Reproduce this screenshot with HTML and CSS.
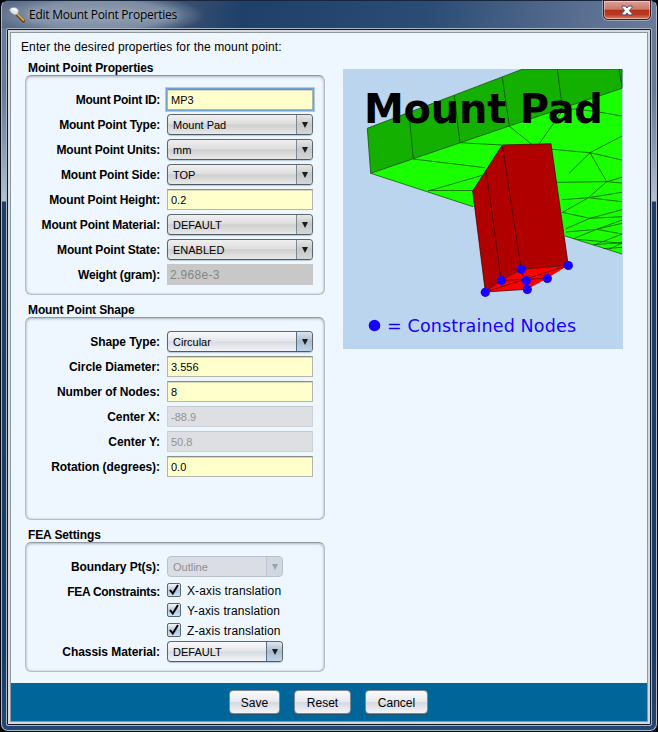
FILE: index.html
```html
<!DOCTYPE html>
<html lang="en">
<head>
<meta charset="utf-8">
<title>Edit Mount Point Properties</title>
<link rel="stylesheet" href="styles.css">
</head>
<body>
<div class="window">
  <header class="titlebar">
    <svg class="app-icon" width="18" height="18" viewBox="0 0 18 18">
      <path d="M9 8.500 15.500 15" stroke="#6d4317" stroke-width="3.200" stroke-linecap="round"/>
      <path d="M9.500 8.200 15.500 14.200" stroke="#dda650" stroke-width="1.700" stroke-linecap="round"/>
      <path d="M1.500 3.500Q3 1 7 1.500Q11 2.500 10.500 6Q9.500 9.500 6 8.500Q2 7 1.500 3.500Z" fill="#dfe5e8" stroke="#929da6" stroke-width=".8"/>
      <path d="M2.500 3.200Q5 1.300 9 3.500L8 5.500Q5 3.800 2.500 3.200Z" fill="#fff"/>
    </svg>
    <span class="title">Edit Mount Point Properties</span>
    <div class="close">
      <svg width="12" height="11" viewBox="0 0 12 11"><path d="M1 1H4.500L6 3 7.500 1H11V2.500L8.500 5.500 11 8.500V10H7.500L6 8 4.500 10H1V8.500L3.500 5.500 1 2.500Z" fill="#f8f8f8" stroke="#4b5068"/></svg>
    </div>
  </header>
  <div class="client">
    <div class="content">
      <p class="intro">Enter the desired properties for the mount point:</p>
      <div class="columns">
        <div class="forms">
          <h2>Moint Point Properties</h2>
          <section class="group props">
            <label class="tight">Mount Point ID:</label><div class="input focus">MP3</div>
            <label>Mount Point Type:</label><div class="select">Mount Pad<i></i></div>
            <label>Mount Point Units:</label><div class="select">mm<i></i></div>
            <label>Mount Point Side:</label><div class="select">TOP<i></i></div>
            <label>Mount Point Height:</label><div class="input">0.2</div>
            <label>Mount Point Material:</label><div class="select">DEFAULT<i></i></div>
            <label>Mount Point State:</label><div class="select">ENABLED<i></i></div>
            <label>Weight (gram):</label><div class="readonly">2.968e-3</div>
          </section>
          <h2 class="lower">Mount Point Shape</h2>
          <section class="group shape">
            <label>Shape Type:</label><div class="select bright">Circular<i></i></div>
            <label>Circle Diameter:</label><div class="input">3.556</div>
            <label>Number of Nodes:</label><div class="input">8</div>
            <label>Center X:</label><div class="input off">-88.9</div>
            <label>Center Y:</label><div class="input off">50.8</div>
            <label>Rotation (degrees):</label><div class="input">0.0</div>
          </section>
          <h2 class="lower">FEA Settings</h2>
          <section class="group fea">
            <label>Boundary Pt(s):</label><div class="select short disabled">Outline<i></i></div>
            <label class="tight">FEA Constraints:</label>
            <div class="checks">
              <div class="check"><span class="box"><svg width="14" height="14" viewBox="0 0 14 14"><path d="M3 7 5.800 10.500 11 2" /></svg></span><span class="check-text">X-axis translation</span></div>
              <div class="check"><span class="box"><svg width="14" height="14" viewBox="0 0 14 14"><path d="M3 7 5.800 10.500 11 2" /></svg></span><span class="check-text">Y-axis translation</span></div>
              <div class="check"><span class="box"><svg width="14" height="14" viewBox="0 0 14 14"><path d="M3 7 5.800 10.500 11 2" /></svg></span><span class="check-text">Z-axis translation</span></div>
            </div>
            <label>Chassis Material:</label><div class="select short bright">DEFAULT<i></i></div>
          </section>
        </div>
        <svg class="preview" width="280" height="280" viewBox="0 0 280 280">
          <rect width="280" height="280" fill="#bbd5ee"/>
          <path d="M27.700 104.300 70.300 90 117 73.700 166.300 57 279 19.300V185L222 167 130 137.700Z" fill="#1aff00"/>
          <path d="M24.300 59.300 180 0H279V19.300L166.300 57 27.700 104.300Z" fill="#13b000" stroke="#174d10" stroke-width=".8"/>
          <g class="mesh">
            <path d="M66 43.600 70.300 90M111.300 26.700 117 73.700M159.300 8.300 166.300 57M214.300 0 219 37M276 0 278.700 17"/>
            <path d="M27.700 104.300 130 137.700M222 167 279 185"/>
            <path d="M70.300 90 142 98.700M85.300 122 142 105.500M85 121.500H130M117 73.700 159 76M166 57 189 75.500M220 41 196 75"/>
            <path d="M209 80.300 247 83.700 279 67M247 83.700 279 91M247 83.700 226 104.300M247 83.700 263.700 112.700 279 108.300M214.300 113.300 263.700 112.700 279 114M263.700 112.700 245.300 128.700 219 143.700M219 130.700 245.300 128.700 279 123.300M245.300 128.700 279 132.700M220 41 232 40 253.700 42.700 279 47"/>
            <path d="M220 143.500 247 149.300 279 147.700M223 159.700 247 149.300 279 140.700M223 163 253.700 160.300 279 154.300M253.700 160.300 279 165M230.300 169.700 253.700 160.300 279 151M252 175.700 279 165M250 175.700 279 173.700M233.700 170.300 279 174.300M260.300 179.700 279 178.300M266 180.300 279 174"/>
          </g>
          <path d="M142.300 223 158.300 211.300 178.300 200.300 225.300 196.300 204.300 209.300 184.300 220.300Z" fill="#f00"/>
          <path d="M129.700 122 159.300 76 208 74.700 225.300 196.300 178.300 200.300 158.300 211.300 142.300 223Z" fill="#b00000"/>
          <path class="edges" d="M142.300 223 129.700 122 159.300 76 208 74.700 225.300 196.300 178.300 200.300 158.300 211.300 142.300 223 225.300 196.300M143 101 158.300 211.300M159.300 76 178.300 200.300 184.300 220.300M158.300 211.300 204.300 209.300M142.300 223 184.300 220.300"/>
          <g fill="#1800ff">
            <circle cx="142.300" cy="223.300" r="4.600"/><circle cx="158.300" cy="211.500" r="4.600"/><circle cx="178.300" cy="200.300" r="4.600"/><circle cx="225.300" cy="196.500" r="4.600"/><circle cx="204.300" cy="209.500" r="4.600"/><circle cx="183.300" cy="211.500" r="4.600"/><circle cx="184.300" cy="220.500" r="4.600"/><circle cx="31.500" cy="256.500" r="5.800"/>
          </g>
          <text class="pad-title" x="21" y="54" textLength="239">Mount Pad</text>
          <text class="pad-note" x="44" y="263" textLength="189">= Constrained Nodes</text>
        </svg>
      </div>
    </div>
    <footer>
      <div class="button save">Save</div>
      <div class="button reset">Reset</div>
      <div class="button cancel">Cancel</div>
    </footer>
  </div>
</div>
</body>
</html>
```
FILE: styles.css
```css
* { box-sizing: border-box; }
body { margin: 0; width: 658px; height: 732px; padding: 0 1px 1px; background: #02050d; overflow: hidden; font: 12px/15px "Liberation Sans", Arial, sans-serif; color: #000; }
h2, p { margin: 0; }
.window { width: 656px; height: 731px; border: 1px solid #a9bac9; border-top-color: #17263d; border-radius: 7px; padding: 0 4px 4px; background: linear-gradient(#6a7a99 0, #657a9a 90px, #8296b2 140px, #b4c1d0 200px, #1d3e68 201px, #173a66 650px, #254671 100%); }
.titlebar { display: flex; height: 27px; margin: 0 -4px; padding-left: 6px; border-radius: 6px 6px 0 0; background: radial-gradient(ellipse 105px 22px at 98px 14px, #919eaf 0, #8c9aadcc 65%, transparent 100%), linear-gradient(100deg, #5e6e88 0, #324b6e 30%, #1e4069 37%, #2b4c74 65%, #596e90 88%, #6a7a99 100%); }
.app-icon { margin-top: 5px; fill: none; }
.title { margin: 6px 0 0 3px; font: 12px/16px "Open Sans", sans-serif; letter-spacing: -.26px; white-space: nowrap; text-shadow: 0 0 5px #b9c4d2; }
.close { display: flex; align-items: center; justify-content: center; width: 48px; height: 20px; margin: -1px 5px 0 auto; padding-top: 1px; border: 1px solid #401e29; border-radius: 0 0 5px 5px; background: linear-gradient(#dfa095 0, #cb7867 47%, #af2f19 48%, #b93a21 75%, #dc8068); box-shadow: inset 0 0 0 1px #ffffff66, 0 0 0 1px #ffffff55; }
.client { width: 646px; height: 698px; border: 1px solid #a9b6c5; border-radius: 2px; background: #d3d9df; box-shadow: inset 0 0 0 1px #101928, inset 0 0 0 3px #d3d9df, inset 0 0 0 4px #8e969d; padding: 4px; }
.content { height: 650px; padding: 7px 0 0 10px; background: #eef7ff; }
.intro { height: 15px; letter-spacing: .12px; }
.columns { display: flex; align-items: flex-start; gap: 18px; padding-left: 4px; }
.forms { width: 300px; }
h2 { height: 20px; padding: 6px 0 0 3px; font: bold 12px/14px "Liberation Sans", Arial, sans-serif; letter-spacing: -.12px; }
h2.lower { padding-top: 8px; height: 22px; }
.group { display: grid; grid-template-columns: 135px 146px; column-gap: 6px; row-gap: 4px; align-content: start; border: 1px solid #b5bdc7; border-top-color: #92979f; border-radius: 6px; box-shadow: inset 0 1px 3px #9aa5b1aa, inset 0 0 2px #b9c2cc; padding: 13px 0 0; }
.group label { width: 134px; text-align: right; font-weight: bold; line-height: 21px; white-space: nowrap; padding-top: 1px; height: 21px; letter-spacing: -.06px; }
.props { height: 220px; }
.props label { letter-spacing: -.17px; }
.group label.tight { letter-spacing: -.3px; }
.shape { height: 203px; }
.fea { height: 130px; }
.input, .select, .readonly { height: 21px; width: 146px; font-size: 11px; line-height: 19px; }
.input { margin: 0; padding: 1px 3px 0; background: #ffc; border: 1px solid #b4b5b0; border-top-color: #8c8d8a; box-shadow: inset 0 1px #d8d8b8; }
.focus { outline: 1px solid #6da1d4; box-shadow: 0 0 0 2px #a8ccee, inset 0 1px #d8d8b8; }
.input.off { background: #dddfe3; color: #919396; border-color: #cdd2d8; border-top-color: #c2c8ce; box-shadow: none; }
.readonly { background: #c8c8c8; color: #858585; font-size: 12px; line-height: 22px; padding-left: 3px; letter-spacing: .3px; }
.select { display: flex; justify-content: space-between; padding: 0 0 0 5px; border: 1px solid #60666c; border-bottom-color: #505a65; border-radius: 4px; line-height: 20px; background: linear-gradient(#f0f0f0, #dedede 45%, #cfcfcf 52%, #e9e9e9); box-shadow: 0 1px 1px #b7c8d8; overflow: hidden; }
.select i { display: flex; align-items: center; justify-content: center; width: 16px; height: 19px; border-left: 1px solid #7b8995; background: linear-gradient(#e7e7e7, #c6c7c8 50%, #d5d6d8); }
.select i::before { content: ""; border: 3.500px solid transparent; border-top: 6px solid #1c1c1c; border-bottom: 0; }
.bright { background: linear-gradient(#fafafb, #e4e6ea 47%, #d7dae0 52%, #f2f4f8); }
.bright i { background: linear-gradient(#dce5ed, #a9bdcf 50%, #bfd5e8); border-color: #566f85; }
.short { width: 116px; }
.disabled { color: #8c8f94; background: #dadde3; border-color: #bbc1ca; box-shadow: none; }
.disabled i { background: #cfd7e1; border-color: #bdc6d0; }
.disabled i::before { border-top-color: #9ca2aa; }
.checks { height: 56px; padding-top: 2px; }
.check { display: flex; height: 20px; }
.box { width: 14px; height: 14px; border: 1px solid #52687c; border-radius: 2px; background: linear-gradient(#f3f6f9, #b5c7d7 55%, #d1e2f0); }
.box svg { display: block; margin: -1px; fill: none; stroke: #050505; stroke-width: 2; }
.check-text { margin-left: 6px; white-space: nowrap; line-height: 17px; letter-spacing: .12px; }
.preview { display: block; margin-top: 14px; }
.mesh { fill: none; stroke: #084500; stroke-width: .7; }
.edges { fill: none; stroke: #360000; stroke-width: .7; }
.pad-title { font: bold 40px "DejaVu Sans", sans-serif; fill: #000; }
.pad-note { font: 17.500px "DejaVu Sans", sans-serif; fill: #1800ff; }
footer { display: flex; gap: 14px; height: 38px; padding: 7px 0 0 218px; background: #006699; }
.button { height: 24px; border: 1px solid #7d8894; border-radius: 4px; text-align: center; line-height: 24px; background: linear-gradient(#fafafc, #e7e9ed 48%, #d6d9df 53%, #f4f5f9); box-shadow: 0 1px #24506c; }
.save { width: 51px; }
.reset { width: 57px; }
.cancel { width: 63px; }
```
